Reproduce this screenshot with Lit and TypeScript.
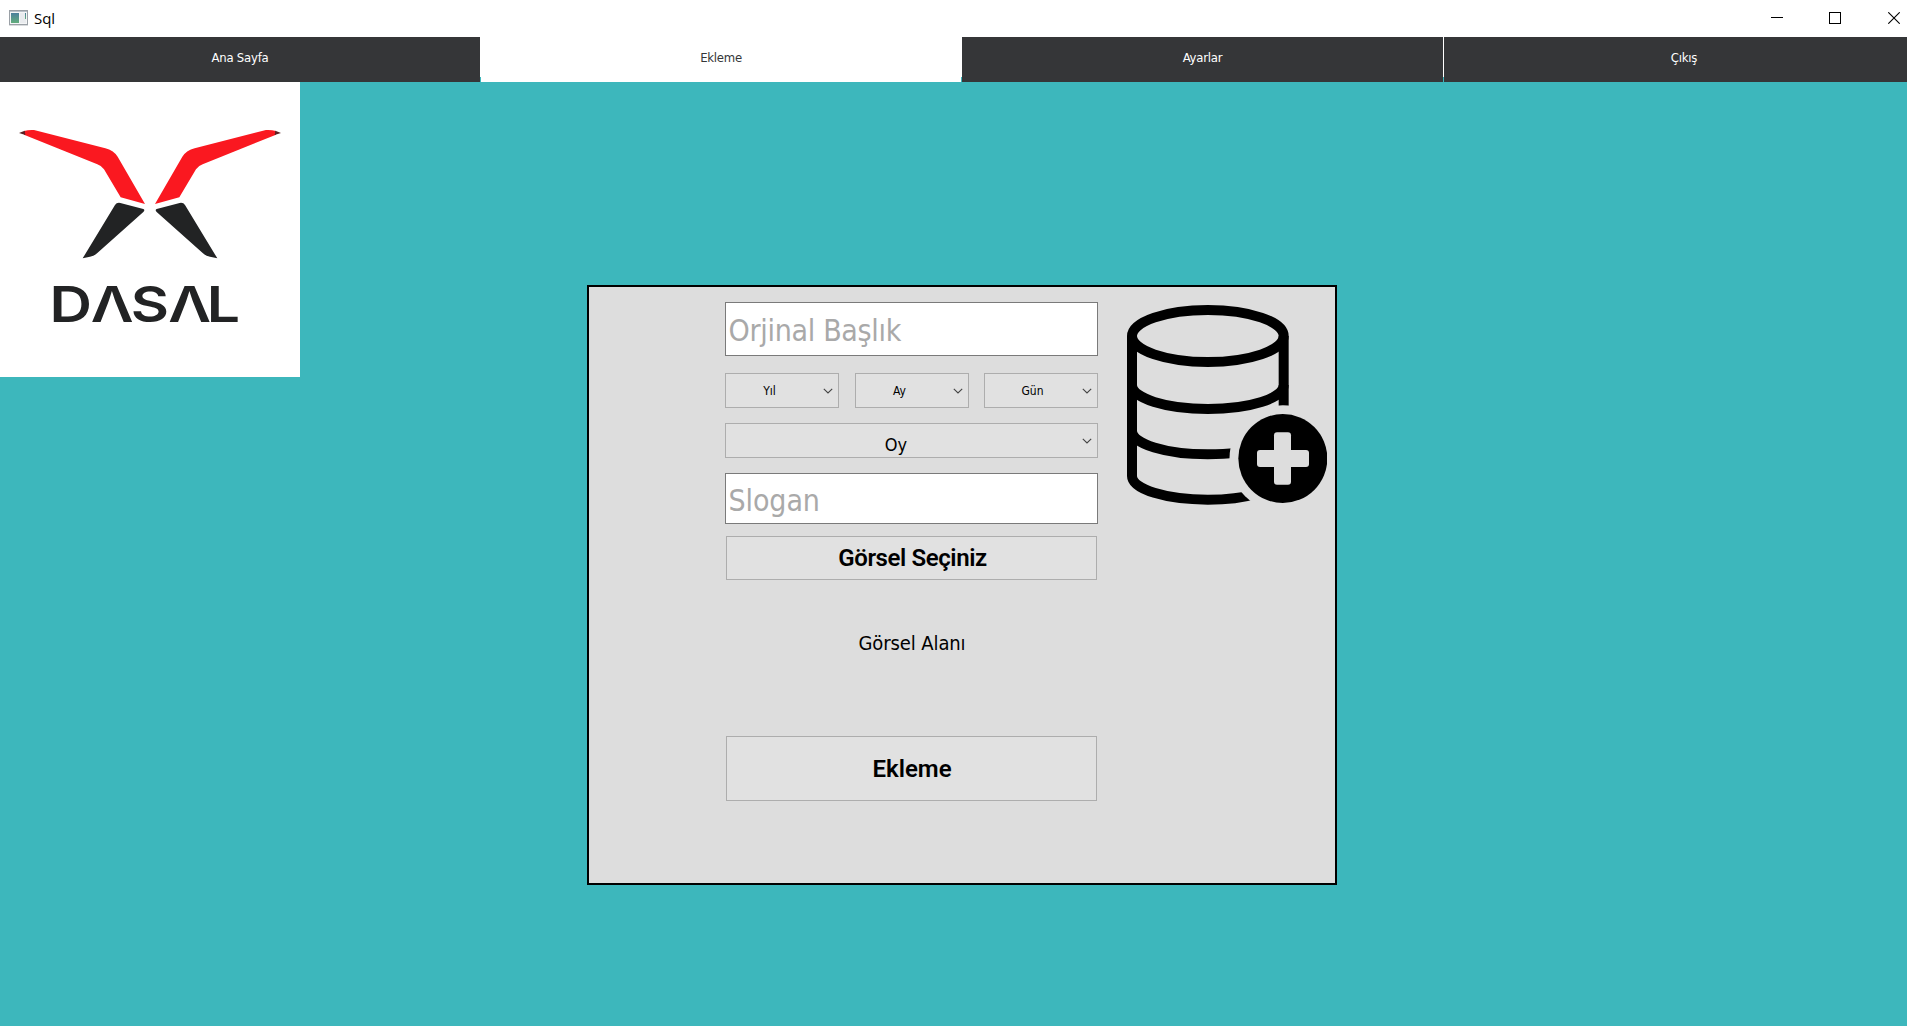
import { LitElement, html, css, svg } from "lit";
import { customElement, property, state } from "lit/decorators.js";
import { classMap } from "lit/directives/class-map.js";

@customElement("title-bar")
class TitleBar extends LitElement {
  static styles = css`
    :host {
      display: flex;
      align-items: center;
      height: 37px;
      box-sizing: border-box;
      padding: 0 7px 0 9px;
      background: #fff;
      color: #000;
      font: 15px/20px "Open Sans", "Noto Sans", sans-serif;
    }
    svg { display: block; }
    .icon { margin-top: -2px; }
    .title { flex: 1; padding: 0 0 2px 6px; letter-spacing: -0.1px; }
    .controls { display: flex; gap: 46px; margin-top: -1px; }
    .controls svg { width: 12px; height: 12px; }
    .controls svg:nth-child(2) { margin-right: 1px; }
  `;
  render() {
    return html`
      <svg class="icon" width="19" height="16" viewBox="0 0 19 16">
        <defs>
          <linearGradient id="g" x1="0" y1="0" x2="0" y2="1">
            <stop offset="0" stop-color="#4b7f9c" />
            <stop offset="1" stop-color="#62ad7c" />
          </linearGradient>
        </defs>
        <rect x="0.5" y="0.5" width="18" height="14" fill="#f4f5f6" stroke="#9aa0a6" />
        <rect x="1" y="1" width="17" height="1" fill="#b9c0c8" />
        <rect x="2" y="3" width="8" height="10" fill="url(#g)" />
        <rect x="11" y="3" width="6" height="10" fill="#e9ebee" />
        <rect x="16" y="3" width="1" height="6" fill="url(#g)" />
        <rect x="0" y="15" width="19" height="1" fill="#d9dbdd" />
      </svg>
      <span class="title">Sql</span>
      <div class="controls">
        <svg viewBox="0 0 12 12"><rect y="5" width="12" height="1" /></svg>
        <svg viewBox="0 0 12 12"><rect x="0.5" y="0.5" width="11" height="11" fill="none" stroke="#000" /></svg>
        <svg viewBox="0 0 12 12"><path d="M0.3 0.3 11.7 11.7M11.7 0.3 0.3 11.7" stroke="#000" stroke-width="1.1" /></svg>
      </div>
    `;
  }
}

@customElement("tab-strip")
class TabStrip extends LitElement {
  @property({ type: Array }) tabs: string[] = [];
  @state() private active = 1;

  static styles = css`
    :host {
      display: flex;
      height: 45px;
      overflow: hidden;
      background: linear-gradient(#fff 40px, #3db7bc 40px);
    }
    .tab {
      flex: none;
      box-sizing: border-box;
      width: 480px;
      margin-right: 1px;
      padding-bottom: 4px;
      display: flex;
      align-items: center;
      justify-content: center;
      background: #353638;
      color: #fff;
      font: 13px/20px "DejaVu Sans Condensed", "DejaVu Sans", sans-serif;
      font-stretch: condensed;
      letter-spacing: -0.25px;
    }
    .tab:nth-child(3) { width: 481px; }
    .active { background: #fff; color: #353638; }
  `;
  render() {
    return this.tabs.map(
      (t, i) => html`<div
        class=${classMap({ tab: true, active: i === this.active })}
        @click=${() => (this.active = i)}
      >${t}</div>`
    );
  }
}

const wing = svg`
  <path fill="#fa1820" d="M72 153Q86 149 102 150L316 205Q340 211 353 230L435 372L362 352L312 268Q306 258 292 253L72 164Z" />
  <path fill="#5a2024" d="M57 159L74 152.500L76 165Z" />
  <path fill="#222324" d="M248 535L345 375Q350 367 361 369L430 387Q436 390 430 396L292 519Q283 528 270 530Z" />
`;

@customElement("brand-logo")
class BrandLogo extends LitElement {
  static styles = css`
    :host { display: block; width: 300px; height: 295px; background: #fff; }
    svg { display: block; }
    .word { font: 600 49px Inter, "Liberation Sans", sans-serif; fill: #222324; }
  `;
  render() {
    return html`
      <svg width="300" height="295" viewBox="0 0 300 295">
        <g transform="scale(0.33333) translate(0 -6)">
          ${wing}
          <g transform="translate(900 0) scale(-1 1)">${wing}</g>
        </g>
        <text class="word" transform="scale(1.2 1)" y="240" x="41.2 75.6 108.9 140.2 172.2">DΛSΛL</text>
      </svg>
    `;
  }
}

@customElement("drop-down")
class DropDown extends LitElement {
  @property() label = "";
  static styles = css`
    :host {
      display: flex;
      align-items: center;
      box-sizing: border-box;
      height: 35px;
      padding-right: 5px;
      border: 1px solid #adadad;
      background: #e1e1e1;
      color: #000;
    }
    .label { flex: 1; text-align: center; padding: var(--pad, 0); }
    svg { display: block; flex: none; }
  `;
  render() {
    return html`
      <span class="label">${this.label}</span>
      <svg width="10" height="6" viewBox="0 0 10 6">
        <path d="M0.8 0.8 5 5 9.2 0.8" fill="none" stroke="#444" stroke-width="1.1" />
      </svg>
    `;
  }
}

@customElement("add-panel")
class AddPanel extends LitElement {
  static styles = css`
    :host {
      display: flex;
      box-sizing: border-box;
      width: 750px;
      height: 600px;
      padding: 15px 0 0 136px;
      border: 2px solid #000;
      background: #ddd;
      color: #000;
      font-family: "DejaVu Sans Condensed", "DejaVu Sans", sans-serif;
      font-stretch: condensed;
    }
    .form { width: 373px; display: flex; flex-direction: column; }
    .field {
      box-sizing: border-box;
      display: flex;
      align-items: center;
      border: 1px solid #7a7a7a;
      background: #fff;
      color: #a9a9a9;
      font-size: 30px;
      line-height: 36px;
      white-space: nowrap;
    }
    .heading { height: 54px; padding: 3px 0 0 2.5px; letter-spacing: -0.3px; }
    .slogan { height: 51px; padding: 4px 0 0 2.5px; margin-top: 15px; letter-spacing: -0.1px; }
    .dates { display: flex; margin-top: 17px; font-size: 12px; line-height: 16px; }
    .dates drop-down { width: 114px; --pad: 0 10px 0 0; }
    .dates drop-down:nth-child(2) { margin: 0 15px 0 16px; }
    .dates drop-down:nth-child(3) { --pad: 0 2px 0 0; }
    .vote { margin-top: 15px; font-size: 18px; line-height: 22px; --pad: 8px 16px 0 0; }
    .button {
      box-sizing: border-box;
      display: flex;
      align-items: center;
      justify-content: center;
      margin: 0 1px;
      border: 1px solid #adadad;
      background: #e1e1e1;
      font: 600 24px/30px Roboto, "Liberation Sans", sans-serif;
    }
    .pick { height: 44px; margin-top: 12px; padding-left: 2px; letter-spacing: -0.4px; }
    .add { height: 65px; padding-left: 1px; }
    .preview {
      height: 126px;
      padding: 0 0 30px 1px;
      display: flex;
      align-items: center;
      justify-content: center;
      font-size: 20px;
      line-height: 24px;
      letter-spacing: -0.1px;
    }
    .database { display: block; flex: none; margin: 3px 0 0 29px; }
  `;
  render() {
    return html`
      <div class="form">
        <div class="field heading">Orjinal Başlık</div>
        <div class="dates">
          <drop-down label="Yıl"></drop-down>
          <drop-down label="Ay"></drop-down>
          <drop-down label="Gün"></drop-down>
        </div>
        <drop-down class="vote" label="Oy"></drop-down>
        <div class="field slogan">Slogan</div>
        <div class="button pick">Görsel Seçiniz</div>
        <div class="preview">Görsel Alanı</div>
        <div class="button add">Ekleme</div>
      </div>
      <svg class="database" width="200" height="200" viewBox="51 75 600 600">
        <mask id="cut" maskUnits="userSpaceOnUse" x="40" y="60" width="620" height="620">
          <rect x="40" y="60" width="620" height="620" fill="#fff" />
          <circle cx="518.5" cy="535.5" r="160" fill="#000" />
        </mask>
        <g mask="url(#cut)" fill="none" stroke="#000" stroke-width="30">
          <ellipse cx="293.5" cy="168" rx="227.5" ry="78" />
          <path d="M66 168V588C66 628 168 659 293.5 659C350 659 400 653 440 641" />
          <path d="M521 168V420" />
          <path d="M66 315C66 355 168 387 293.5 387S521 355 521 315" />
          <path d="M66 452C66 492 168 523 293.5 523C320 523 350 522 380 518" />
        </g>
        <circle cx="518.5" cy="535.5" r="133.5" />
        <rect x="441" y="510" width="156" height="51" rx="9" fill="#ddd" />
        <rect x="492" y="457" width="51" height="157" rx="9" fill="#ddd" />
      </svg>
    `;
  }
}

@customElement("app-root")
class AppRoot extends LitElement {
  static styles = css`
    :host {
      display: flex;
      flex-direction: column;
      width: 100%;
      height: 100vh;
      overflow: hidden;
      background: #3db7bc;
    }
    .content { flex: 1; display: flex; align-items: flex-start; }
    brand-logo { flex: none; }
    add-panel { flex: none; margin: 203px 0 0 287px; }
  `;
  render() {
    return html`
      <title-bar></title-bar>
      <tab-strip .tabs=${["Ana Sayfa", "Ekleme", "Ayarlar", "Çıkış"]}></tab-strip>
      <div class="content">
        <brand-logo></brand-logo>
        <add-panel></add-panel>
      </div>
    `;
  }
}
